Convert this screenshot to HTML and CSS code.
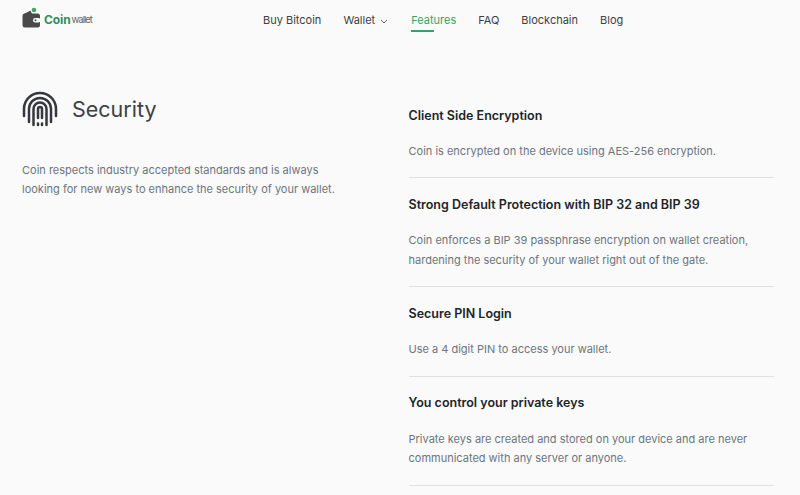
FILE: index.html
```html
<!DOCTYPE html>
<html lang="en">
<head>
<meta charset="utf-8">
<title>Coin wallet</title>
<link rel="stylesheet" href="styles.css">
</head>
<body>
<header class="topbar">
  <a class="logo" href="#">
    <svg class="logo-icon" width="19" height="21" viewBox="0 0 19 21">
      <circle cx="12" cy="3" r="2.3" fill="#3aa76d"/>
      <path d="M2 7 L8.500 3.500 L10 7 Z" fill="#4a4a4a"/>
      <rect x="0.500" y="6.500" width="17.500" height="14" rx="2.500" fill="#4a4a4a"/>
      <rect x="11" y="11" width="7.500" height="4.500" rx="2.200" fill="#fafafa"/>
      <circle cx="13.500" cy="13.200" r="1" fill="#4a4a4a"/>
    </svg>
    <span class="logo-coin">Coin</span><span class="logo-wallet">wallet</span>
  </a>
  <nav class="nav">
    <a href="#">Buy Bitcoin</a>
    <a href="#" class="has-caret">Wallet
      <svg class="caret" width="8" height="5" viewBox="0 0 8 5"><path d="M1 1 L4 4 L7 1" fill="none" stroke="#666" stroke-width="1"/></svg>
    </a>
    <a href="#" class="active">Features</a>
    <a href="#">FAQ</a>
    <a href="#">Blockchain</a>
    <a href="#">Blog</a>
  </nav>
</header>
<main class="content">
  <section class="intro">
    <div class="intro-head">
      <svg class="print" width="36" height="36" viewBox="0 0 36 36" fill="none" stroke="#35383c" stroke-width="2.500" stroke-linecap="round">
        <path d="M2 25 V18 A16 16 0 0 1 34 18 V25"/>
        <path d="M7 31 V18 A11 11 0 0 1 29 18 V31"/>
        <path d="M11.500 34 V18 A6.500 6.500 0 0 1 24.500 18 V34"/>
        <path d="M16 27 V18 A2 2 0 0 1 20 18 V27"/>
        <path d="M16 32.500 V34 M20 32.500 V34"/>
      </svg>
      <h1>Security</h1>
    </div>
    <p>Coin respects industry accepted standards and is always looking for new ways to enhance the security of your wallet.</p>
  </section>
  <section class="features">
    <article class="feature">
      <h2>Client Side Encryption</h2>
      <p>Coin is encrypted on the device using AES-256 encryption.</p>
    </article>
    <article class="feature">
      <h2>Strong Default Protection with BIP 32 and BIP 39</h2>
      <p>Coin enforces a BIP 39 passphrase encryption on wallet creation, hardening the security of your wallet right out of the gate.</p>
    </article>
    <article class="feature">
      <h2>Secure PIN Login</h2>
      <p>Use a 4 digit PIN to access your wallet.</p>
    </article>
    <article class="feature">
      <h2>You control your private keys</h2>
      <p>Private keys are created and stored on your device and are never communicated with any server or anyone.</p>
    </article>
  </section>
</main>
</body>
</html>
```
FILE: styles.css
```css
* { box-sizing: border-box; }
html, body { margin: 0; height: 495px; overflow: hidden; }
body { background: #fafafa; font-family: Inter, "Liberation Sans", sans-serif; color: #212529; }
a { text-decoration: none; color: inherit; }

.topbar { height: 40px; padding-left: 22px; display: flex; align-items: flex-start; }
.logo { display: flex; align-items: center; width: 70px; height: 21px; margin-top: 7px; }
.logo-icon { flex: none; margin-right: 3px; }
.logo-coin { color: #2f8f5b; font-weight: 700; font-size: 12px; line-height: 14px; margin-top: 4px; letter-spacing: -0.1px; }
.logo-wallet { color: #666; font-size: 9.5px; line-height: 14px; margin-left: 1px; margin-top: 4px; letter-spacing: -1px; }

.nav { display: flex; gap: 22px; margin-left: 171px; padding-top: 12px; font-size: 11px; line-height: 16px; color: #3d4045; }
.nav a { display: block; height: 20px; white-space: nowrap; }
.nav .has-caret { display: flex; align-items: flex-start; gap: 5px; }
.caret { margin-top: 7px; }
.nav .active { color: #36a269; position: relative; margin-left: 1px; }
.nav .active::after { content: ""; position: absolute; left: 0; top: 18px; width: 23px; height: 1.5px; background: #36a269; }

.content { display: flex; align-items: flex-start; padding: 0 26px 0 22px; }
.intro { width: 386.5px; flex: none; padding-top: 51px; }
.intro-head { display: flex; align-items: center; gap: 14px; }
.intro-head h1 { margin: 0; font-size: 21.5px; font-weight: 400; color: #3d4045; line-height: 36px; }
.intro p { margin: 33.5px 0 0; width: 320px; font-size: 11px; line-height: 19.8px; color: #6c757d; }

.features { flex: 1; padding-top: 65.500px; }
.feature { border-bottom: 1px solid #dfe1e3; padding-bottom: 15.500px; margin-bottom: 16.500px; }
.feature h2 { margin: 0; font-size: 12.5px; font-weight: 600; line-height: 20px; color: #212529; }
.feature p { margin: 16.500px 0 0; font-size: 11px; line-height: 19.8px; color: #6c757d; }
```
